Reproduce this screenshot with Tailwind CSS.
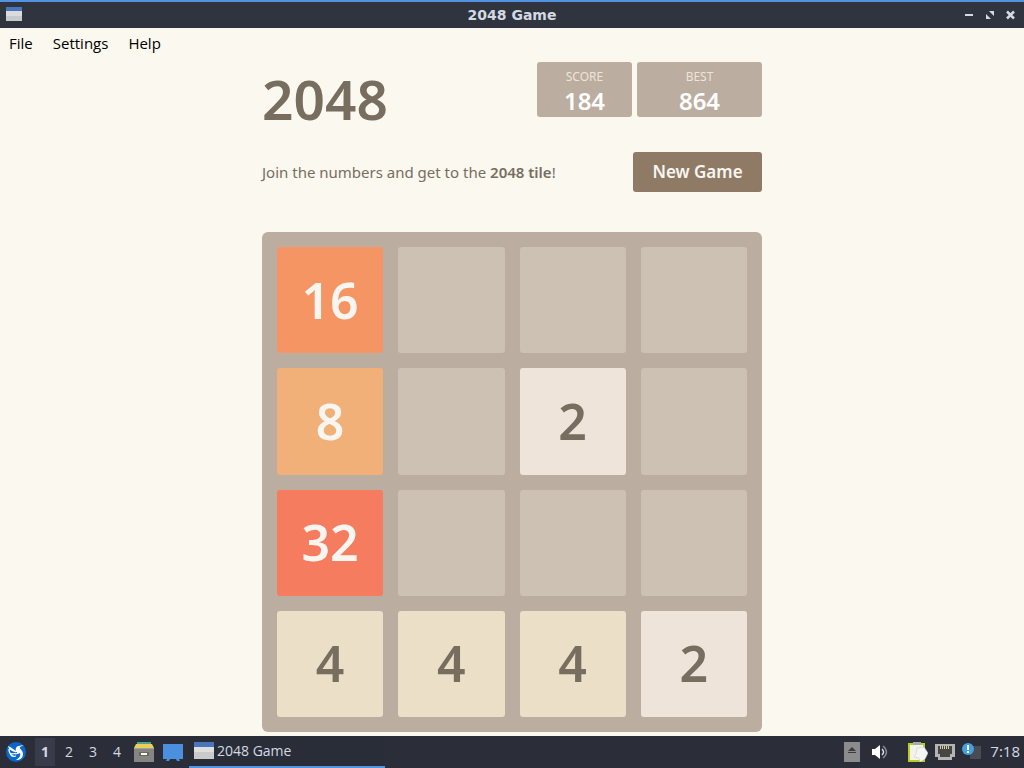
<!DOCTYPE html>
<html lang="en">
<head>
<meta charset="utf-8">
<meta name="viewport" content="width=device-width, initial-scale=1">
<title>2048 Game</title>
<script src="https://cdn.jsdelivr.net/npm/@tailwindcss/browser@4"></script>
</head>
<body class="flex min-h-screen flex-col bg-[#fbf8ef] font-['Noto_Sans',sans-serif] text-[#776e60]">
<header class="grid h-7 grid-cols-[1fr_auto_1fr] items-center border-t-2 border-[#5294e2] bg-[#2f343f] px-1.5 text-[#d3dae3]">
  <svg class="h-4 w-4" viewBox="0 0 16 16" aria-hidden="true"><path fill="#d9dbdc" d="M0 0h16v14H0z"/><path fill="#c6cacc" d="M0 9h16v5H0z"/><path fill="#4a75ba" d="M0 0h16v4H0z"/></svg>
  <h1 class="font-['DejaVu_Sans',sans-serif] text-sm leading-5 font-bold">2048 Game</h1>
  <div class="flex justify-end gap-1">
    <button aria-label="Minimize" class="h-4 w-4"><svg viewBox="0 0 16 16"><path fill="#d3dae3" d="M3 7h8v2H3z"/></svg></button>
    <button aria-label="Restore" class="h-4 w-4"><svg viewBox="0 0 16 16"><path fill="#d3dae3" d="M7 4h5v5zM4 7v5h5z"/></svg></button>
    <button aria-label="Close" class="h-4 w-4"><svg viewBox="0 0 16 16"><path stroke="#d3dae3" stroke-width="2.500" d="m5 4.500 7 7m0-7-7 7"/></svg></button>
  </div>
</header>
<nav class="flex h-[30px] items-center gap-5 px-[9px] font-['Open_Sans',sans-serif] text-[15px] text-black" aria-label="Menu">
  <button>File</button><button>Settings</button><button>Help</button>
</nav>
<main class="mx-auto w-full max-w-[500px] flex-1 pt-1 pb-1">
  <div class="flex justify-between">
    <h2 class="pt-2 text-[55px] leading-[58px] font-semibold">2048</h2>
    <div class="flex h-[55px] gap-[5px] text-center text-white">
      <div class="w-[95px] rounded-[3px] bg-[#bbada0] pt-1.5"><div class="text-xs leading-[18px] text-[#eee4da]">SCORE</div><div class="text-2xl leading-[30px] font-semibold">184</div></div>
      <div class="w-[125px] rounded-[3px] bg-[#bbada0] pt-1.5"><div class="text-xs leading-[18px] text-[#eee4da]">BEST</div><div class="text-2xl leading-[30px] font-semibold">864</div></div>
    </div>
  </div>
  <div class="mt-6 flex items-center justify-between">
    <p class="text-[15px]">Join the numbers and get to the <strong class="font-semibold">2048 tile</strong>!</p>
    <button class="h-10 w-[129px] rounded-[3px] bg-[#8f7a66] text-[17px] font-semibold text-[#f9f6f2]">New Game</button>
  </div>
  <div class="mt-10 grid aspect-square grid-cols-4 grid-rows-4 gap-[15px] rounded-md bg-[#bbada0] p-[15px] text-[50px] font-semibold *:flex *:items-center *:justify-center *:rounded-[3px]">
    <div class="bg-[#f59563] text-[#f9f6f2]">16</div><div class="bg-[#cdc1b4]"></div><div class="bg-[#cdc1b4]"></div><div class="bg-[#cdc1b4]"></div>
    <div class="bg-[#f0b078] text-[#f9f6f2]">8</div><div class="bg-[#cdc1b4]"></div><div class="bg-[#eee4da]">2</div><div class="bg-[#cdc1b4]"></div>
    <div class="bg-[#f67c5f] text-[#f9f6f2]">32</div><div class="bg-[#cdc1b4]"></div><div class="bg-[#cdc1b4]"></div><div class="bg-[#cdc1b4]"></div>
    <div class="bg-[#ebdfc8]">4</div><div class="bg-[#ebdfc8]">4</div><div class="bg-[#ebdfc8]">4</div><div class="bg-[#eee4da]">2</div>
  </div>
</main>
<footer class="flex h-8 items-center bg-[#2b2e39] pr-1 pl-1.5 font-['Open_Sans',sans-serif] text-sm text-[#d3dae3]">
  <button aria-label="Applications" class="h-5 w-5"><svg viewBox="0 0 20 20"><circle cx="10" cy="10" r="10" fill="#0868cb"/><path fill="#fff" d="M2 4c3 1 5 3 8 5-1-3 1-5 3-5l5-1-4 2c-1 2 3 3 3 7 0 4-3 6-7 6 3-2 5-4 4-7-2 1-4 2-6 1 2 0 3-1 3-2C7 10 3 8 2 4Z"/><path fill="none" stroke="#fff" stroke-width="1.300" d="M3 7c0 5 2 6 7 4M4 11c1 3 3 4 6 3"/></svg></button>
  <div class="ml-[9px] flex gap-1 *:h-7 *:w-5">
    <button class="bg-[#383c4a] font-bold">1</button><button>2</button><button>3</button><button>4</button>
  </div>
  <button aria-label="File manager" class="ml-[7px] h-5 w-5"><svg viewBox="0 0 20 20"><path fill="#46a58e" d="M3 0h14v2H3z"/><path fill="#e9cf58" d="M2 2h16l2 4H0z"/><path fill="#858582" d="M0 6h20v14H0z"/><path fill="#a0a09c" d="M0 6h20v1H0z"/><path fill="#696967" d="M5 10h10v4H5z"/><path fill="#fff" d="M7 11h6v2H7z"/></svg></button>
  <button aria-label="Show desktop" class="ml-[9px] h-5 w-5"><svg viewBox="0 0 20 20"><path fill="#4a90df" d="M0 2h20v15h-4l1 2h-3l-1-2H7l-1 2H3l1-2H0z"/></svg></button>
  <button class="ml-1.5 flex h-8 w-[196px] items-center gap-[3px] border-b-2 border-[#5294e2] bg-[#292d37] px-[5px]">
    <svg class="h-5 w-5" viewBox="0 0 20 20" aria-hidden="true"><path fill="#dededf" d="M0 1h20v17H0z"/><path fill="#c9cacc" d="M0 11h20v7H0z"/><path fill="#4a75ba" d="M0 1h20v5H0z"/></svg>2048 Game
  </button>
  <div class="ml-auto flex items-center">
    <button aria-label="Eject" class="h-5 w-4"><svg class="h-5 w-4" viewBox="0 0 16 20"><path fill="#8c8c8c" d="M0 0h16v20H0z"/><path fill="#393c40" d="m8 5 4 4H4zM4 10h8v1H4z"/></svg></button>
    <button aria-label="Volume" class="ml-3 h-4 w-4"><svg viewBox="0 0 16 16"><path fill="#fff" d="M0 5h3l5-4v14l-5-4H0z"/><path fill="none" stroke="#dce0e5" stroke-width="1.500" d="M10 5q3 3 0 6"/><path fill="none" stroke="#858a94" stroke-width="1.500" d="M11 2q7 6 0 12"/></svg></button>
    <button aria-label="Clipboard" class="ml-5 h-5 w-5"><svg viewBox="0 0 20 20"><path fill="#b8cc28" d="M0 1h17v19H0z"/><path fill="#f3f3e9" d="M2 3h13v15H2z"/><path fill="#aaa" d="M5 0h8v3H5z"/><path fill="#f5f5f4" stroke="#c7c7c1" stroke-width=".5" d="m9 6 7-1 4 6-3 6-5 3-1-4-5-1 2-3z"/></svg></button>
    <button aria-label="Network" class="ml-[7px] h-5 w-5"><svg viewBox="0 0 20 20"><path fill="#b4b4b2" d="M0 2h20v13h-3v3H3v-3H0z"/><path fill="#464744" d="M3 4h14v8h-2v3H5v-3H3z"/><path stroke="#d6cea0" d="M5.500 4v3m2-3v3m2-3v3m2-3v3m2-3v3"/></svg></button>
    <button aria-label="Notifications" class="ml-[7px] h-5 w-5"><svg viewBox="0 0 20 20"><path fill="#484c53" d="M8 4h11v13H8z"/><circle cx="6" cy="7" r="6" fill="#45a0df"/><path fill="#fff" d="M5 3h2v5H5zm0 6h2v2H5z"/></svg></button>
    <time class="ml-2 text-[15px]">7:18</time>
  </div>
</footer>
</body>
</html>
